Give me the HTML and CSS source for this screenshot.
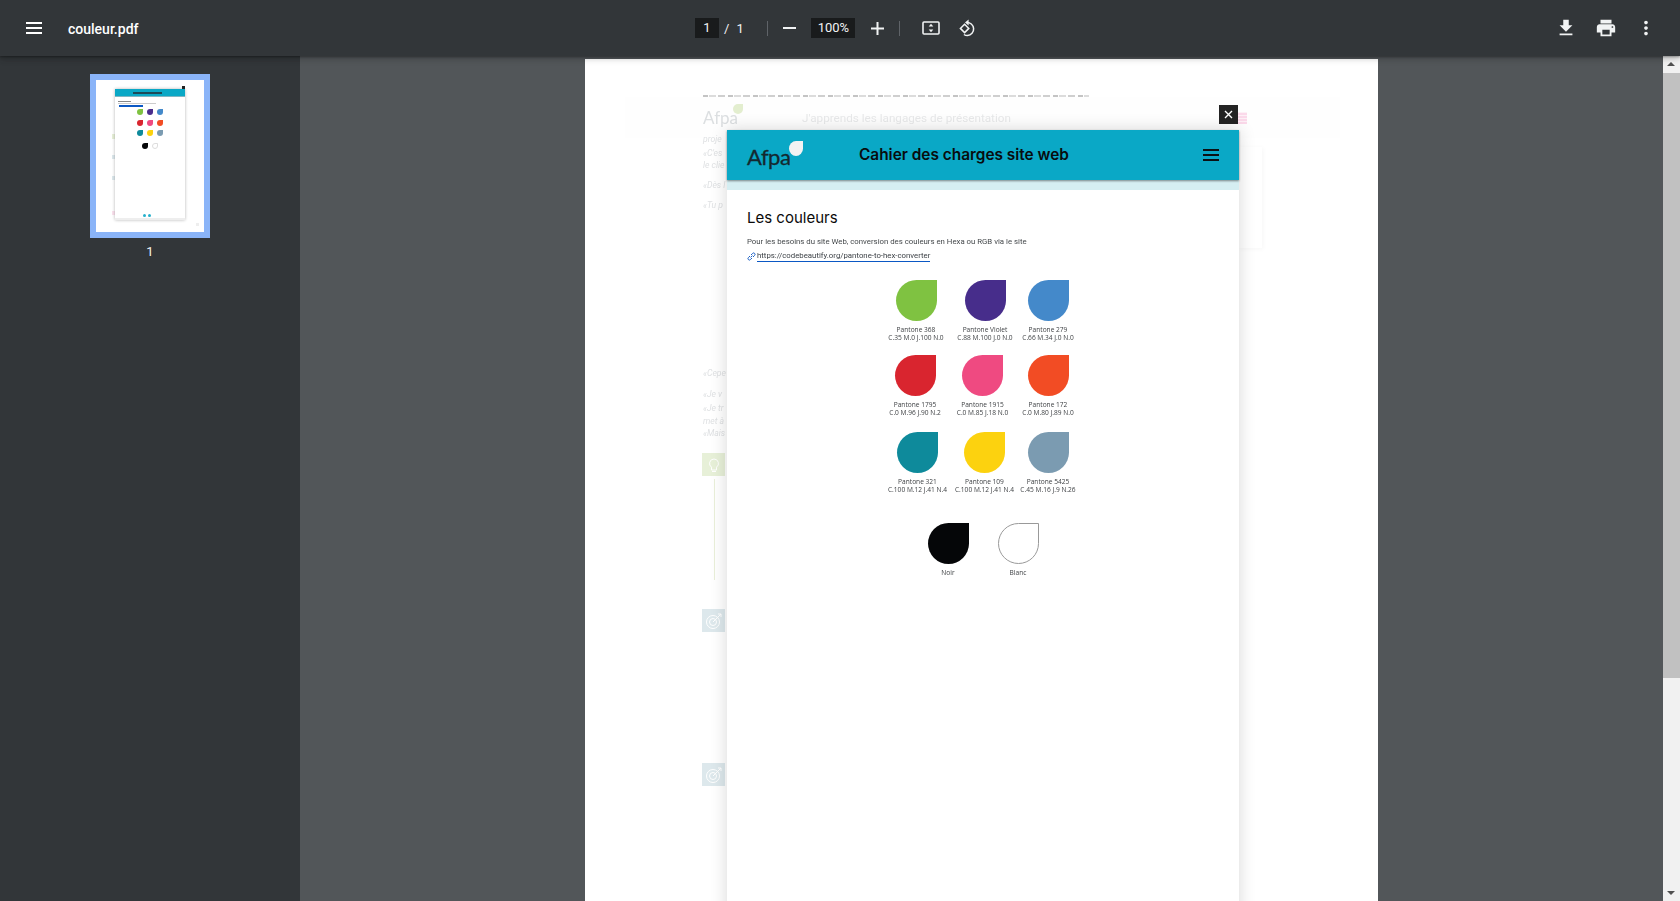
FILE: index.html
```html
<!DOCTYPE html>
<html>

<head>
    <title>couleur.pdf</title>
    <meta name='viewport' content='width=device-width'>
    <link rel="stylesheet" href="styles.css">
</head>

<body>
    <header class="toolbar">
        <div class="tb-left">
            <svg class="ico-menu" width="16" height="12" viewBox="0 0 16 12"><path d="M0 0h16v2H0zM0 5h16v2H0zM0 10h16v2H0z" fill="#fff"/></svg>
            <span class="doc-title">couleur.pdf</span>
        </div>
        <div class="tb-center">
            <span class="num-box page-box">1</span>
            <span class="page-sep">/</span>
            <span class="page-total">1</span>
            <span class="tb-divider first"></span>
            <svg class="ico-minus" width="13" height="2" viewBox="0 0 13 2"><path d="M0 0h13v2H0z" fill="#f1f3f4"/></svg>
            <span class="num-box zoom-box">100%</span>
            <svg class="ico-plus" width="13" height="13" viewBox="0 0 13 13"><path d="M5.5 0h2v5.5H13v2H7.5V13h-2V7.5H0v-2h5.5z" fill="#f1f3f4"/></svg>
            <span class="tb-divider second"></span>
            <svg class="ico-fit" width="18" height="14" viewBox="0 0 18 14"><rect x="1" y="1" width="16" height="12" rx="1" fill="none" stroke="#f1f3f4" stroke-width="1.6"/><path d="M9 2.8l2.3 2.8H6.700zM9 11.200L6.700 8.400h4.600z" fill="#f1f3f4"/></svg>
            <svg class="ico-rotate" width="18" height="18" viewBox="0 0 18 18"><path d="M5.600 5.200L1.400 9.400l4.200 4.200 4.200-4.200z" fill="none" stroke="#f1f3f4" stroke-width="1.5"/><path d="M7.500 3.400a6.600 6.600 0 1 1 1 13.200c-1.400 0-2.600-.4-3.600-1.100" fill="none" stroke="#f1f3f4" stroke-width="1.5"/><path d="M9.600 0.400L6 3.400l3.600 3z" fill="#f1f3f4"/></svg>
        </div>
        <div class="tb-right">
            <svg width="22" height="22" viewBox="0 0 24 24"><path d="M19 9h-4V3H9v6H5l7 7 7-7zM5 18v2h14v-2H5z" fill="#f1f3f4"/></svg>
            <svg width="22" height="22" viewBox="0 0 24 24"><path d="M19 8H5c-1.660 0-3 1.340-3 3v6h4v4h12v-4h4v-6c0-1.660-1.340-3-3-3zm-3 11H8v-5h8v5zm3-7c-.55 0-1-.45-1-1s.45-1 1-1 1 .45 1 1-.45 1-1 1zm-1-9H6v4h12V3z" fill="#f1f3f4"/></svg>
            <svg width="22" height="22" viewBox="0 0 24 24"><path d="M12 8c1.100 0 2-.9 2-2s-.9-2-2-2-2 .9-2 2 .9 2 2 2zm0 2c-1.100 0-2 .9-2 2s.9 2 2 2 2-.9 2-2-.9-2-2-2zm0 6c-1.100 0-2 .9-2 2s.9 2 2 2 2-.9 2-2-.9-2-2-2z" fill="#f1f3f4"/></svg>
        </div>
    </header>

    <div class="content">
        <aside class="sidebar">
            <div class="thumb">
                <div class="thumb-page">
                    <div class="mini-bit b-green"></div>
                    <div class="mini-bit b-blue1"></div>
                    <div class="mini-bit b-blue2"></div>
                    <div class="mini-bit b-pink"></div>
                    <div class="mini-bit b-dot"></div>
                    <div class="mini-close"></div>
                    <div class="mini-modal">
                        <div class="mini-head"><span class="mini-title"></span></div>
                        <div class="mini-line"></div>
                        <div class="mini-line short"></div>
                        <div class="mini-link"></div>
                        <div class="mini-row">
                            <i class="m-green"></i><i class="m-violet"></i><i class="m-blue"></i>
                        </div>
                        <div class="mini-row">
                            <i class="m-red"></i><i class="m-pink"></i><i class="m-orange"></i>
                        </div>
                        <div class="mini-row">
                            <i class="m-teal"></i><i class="m-yellow"></i><i class="m-grey"></i>
                        </div>
                        <div class="mini-row two">
                            <i class="m-black"></i><i class="m-white"></i>
                        </div>
                        <div class="mini-dots"><b></b><b></b></div>
                        <div class="mini-foot"></div>
                    </div>
                </div>
            </div>
            <div class="thumb-num">1</div>
        </aside>

        <main class="viewer">
            <div class="page">
                <!-- document behind the popup, washed out -->
                <div class="ghost-cut"></div>
                <div class="ghost-band"></div>
                <div class="ghost ghost-logo">Afpa<i></i></div>
                <div class="ghost ghost-h1">J'apprends les langages de présentation</div>
                <div class="ghost ghost-pink"></div>
                <div class="ghost ghost-card"></div>
                <div class="ghost ghost-text t1">proje</div>
                <div class="ghost ghost-text t2">«C'es</div>
                <div class="ghost ghost-text t3">le clie</div>
                <div class="ghost ghost-text t4">«Dès l</div>
                <div class="ghost ghost-text t5">«Tu p</div>
                <div class="ghost ghost-text t6">«Cepe</div>
                <div class="ghost ghost-text t7">«Je v</div>
                <div class="ghost ghost-text t8">«Je tr</div>
                <div class="ghost ghost-text t9">met à</div>
                <div class="ghost ghost-text t10">«Mais</div>
                <div class="ghost ghost-box bulb">
                    <svg width="16" height="18" viewBox="0 0 16 18"><path d="M8 3a4.500 4.500 0 0 0-2.500 8.200V14h5v-2.800A4.500 4.500 0 0 0 8 3zM6 15.500h4" fill="none" stroke="#fff" stroke-width="1"/></svg>
                </div>
                <div class="ghost ghost-rule"></div>
                <div class="ghost ghost-box target t-a">
                    <svg width="18" height="18" viewBox="0 0 18 18"><circle cx="8" cy="10" r="6.500" fill="none" stroke="#fff"/><circle cx="8" cy="10" r="3.500" fill="none" stroke="#fff"/><path d="M8 10l8-8M13 2h3v3" fill="none" stroke="#fff"/></svg>
                </div>
                <div class="ghost ghost-box target t-b">
                    <svg width="18" height="18" viewBox="0 0 18 18"><circle cx="8" cy="10" r="6.500" fill="none" stroke="#fff"/><circle cx="8" cy="10" r="3.500" fill="none" stroke="#fff"/><path d="M8 10l8-8M13 2h3v3" fill="none" stroke="#fff"/></svg>
                </div>

                <div class="close-btn">
                    <svg width="9" height="9" viewBox="0 0 9 9"><path d="M1 1l7 7M8 1L1 8" stroke="#fff" stroke-width="1.400"/></svg>
                </div>

                <section class="modal">
                    <div class="modal-head">
                        <div class="logo">Afpa<span class="logo-drop"></span></div>
                        <div class="modal-title">Cahier des charges site web</div>
                        <svg class="modal-burger" width="16" height="12" viewBox="0 0 16 12"><path d="M0 0h16v2H0zM0 5h16v2H0zM0 10h16v2H0z" fill="#0b1114"/></svg>
                    </div>
                    <div class="modal-band"></div>
                    <div class="modal-body">
                        <h2>Les couleurs</h2>
                        <p class="intro">Pour les besoins du site Web, conversion des couleurs en Hexa ou RGB via le site</p>
                        <p class="link-line">
                            <svg width="9" height="9" viewBox="0 0 9 9"><path d="M3.600 5.400l1.800-1.800M3 4L1.400 5.600a1.400 1.400 0 0 0 2 2L5 6M4 3l1.600-1.600a1.400 1.400 0 0 1 2 2L6 5" fill="none" stroke="#1a5fc4" stroke-width="1"/></svg>
                            <a href="#">https://codebeautify.org/pantone-to-hex-converter</a>
                        </p>

                        <div class="swatches row-1">
                            <div class="swatch"><div class="drop green"></div><span>Pantone 368</span><span>C.35 M.0 J.100 N.0</span></div>
                            <div class="swatch"><div class="drop violet"></div><span>Pantone Violet</span><span>C.88 M.100 J.0 N.0</span></div>
                            <div class="swatch"><div class="drop blue"></div><span>Pantone 279</span><span>C.66 M.34 J.0 N.0</span></div>
                        </div>
                        <div class="swatches row-2">
                            <div class="swatch"><div class="drop red"></div><span>Pantone 1795</span><span>C.0 M.96 J.90 N.2</span></div>
                            <div class="swatch"><div class="drop pink"></div><span>Pantone 1915</span><span>C.0 M.85 J.18 N.0</span></div>
                            <div class="swatch"><div class="drop orange"></div><span>Pantone 172</span><span>C.0 M.80 J.89 N.0</span></div>
                        </div>
                        <div class="swatches row-3">
                            <div class="swatch"><div class="drop teal"></div><span>Pantone 321</span><span>C.100 M.12 J.41 N.4</span></div>
                            <div class="swatch"><div class="drop yellow"></div><span>Pantone 109</span><span>C.100 M.12 J.41 N.4</span></div>
                            <div class="swatch"><div class="drop slate"></div><span>Pantone 5425</span><span>C.45 M.16 J.9 N.26</span></div>
                        </div>
                        <div class="swatches row-4">
                            <div class="swatch"><div class="drop black"></div><span>Noir</span></div>
                            <div class="swatch"><div class="drop white"></div><span>Blanc</span></div>
                        </div>
                    </div>
                </section>
            </div>
        </main>

        <div class="scrollbar">
            <div class="sb-arrow up"></div>
            <div class="sb-thumb"></div>
            <div class="sb-arrow down"></div>
        </div>
    </div>
</body>

</html>
```

FILE: styles.css
```css
* {
    box-sizing: border-box;
}

html, body {
    height: 100%;
}

body {
    margin: 0;
    overflow: hidden;
    font-family: Roboto, "Liberation Sans", sans-serif;
    background: #525659;
    display: flex;
    flex-direction: column;
}

/* toolbar */
.toolbar {
    height: 56px;
    flex: none;
    background: #323639;
    color: #f1f3f4;
    display: flex;
    align-items: center;
    position: relative;
    z-index: 3;
    box-shadow: 0 -1px 8px rgba(0, 0, 0, .09), 0 4px 8px rgba(0, 0, 0, .06), 0 1px 2px rgba(0, 0, 0, .3), 0 2px 6px rgba(0, 0, 0, .15);
}

.tb-left {
    width: 695px;
    flex: none;
    display: flex;
    align-items: center;
    padding-left: 26px;
}

.doc-title {
    margin-left: 26px;
    padding-top: 1px;
    font-size: 14px;
    font-weight: 500;
    color: #fff;
}

.tb-center {
    display: flex;
    align-items: center;
    flex: none;
}

.num-box {
    background: #191b1c;
    height: 20px;
    font-size: 13px;
    line-height: 20px;
    text-align: center;
    color: #f1f3f4;
}

.page-box {
    width: 24px;
}

.page-sep {
    margin-left: 5px;
    font-size: 13px;
}

.page-total {
    margin-left: 7px;
    font-size: 13px;
    width: 10px;
}

.tb-divider {
    width: 1px;
    height: 15px;
    background: #5f6368;
}

.tb-divider.first {
    margin-left: 21px;
}

.ico-minus {
    margin-left: 15px;
}

.zoom-box {
    width: 44px;
    margin-left: 15px;
}

.ico-plus {
    margin-left: 16px;
}

.tb-divider.second {
    margin-left: 15px;
}

.ico-fit {
    margin-left: 22px;
}

.ico-rotate {
    margin-left: 19px;
}

.tb-right {
    margin-left: auto;
    display: flex;
    gap: 18px;
    padding-right: 23px;
}

/* layout below toolbar */
.content {
    flex: 1;
    display: flex;
    min-height: 0;
}

.sidebar {
    width: 300px;
    flex: none;
    background: #323639;
    padding-top: 18px;
    display: flex;
    flex-direction: column;
    align-items: center;
}

.thumb {
    width: 120px;
    height: 164px;
    padding: 6px;
    background: #8ab4f8;
}

.thumb-page {
    height: 100%;
    background: #fff;
    position: relative;
    filter: blur(.4px);
}

.thumb-num {
    margin-top: 6px;
    font-size: 13px;
    color: #f1f3f4;
}

/* thumbnail contents */
.mini-bit {
    position: absolute;
    left: 16px;
    width: 3px;
    height: 4px;
}

.b-green { top: 54px; height: 5px; background: #e7f0d8; }
.b-blue1 { top: 75px; background: #dde8ec; }
.b-blue2 { top: 96px; background: #dde8ec; }
.b-pink { top: 131px; background: #fbe2ee; }
.b-dot { left: 100px; top: 143px; height: 3px; background: #eee; }

.mini-modal {
    position: absolute;
    left: 19px;
    top: 9px;
    width: 70px;
    height: 131px;
    background: #fff;
    box-shadow: 0 0 3px rgba(0, 0, 0, .3);
    display: flex;
    flex-direction: column;
}

.mini-close {
    position: absolute;
    left: 86px;
    top: 6px;
    width: 3px;
    height: 3px;
    background: #222;
    z-index: 1;
}

.mini-head {
    height: 8px;
    background: #0aa8c6;
    padding: 3px 0 0 18px;
    margin-bottom: 4px;
    border-bottom: 1px solid #7fb6c2;
}

.mini-title {
    display: block;
    width: 29px;
    height: 2px;
    background: #1d4a58;
}

.mini-line {
    height: 1px;
    width: 13px;
    margin: 0 0 1px 3px;
    background: #888;
}

.mini-line.short {
    width: 38px;
    background: #ccc;
}

.mini-link {
    width: 24px;
    height: 2px;
    margin: 0 0 0 4px;
    background: #0b58c4;
}

.mini-row {
    display: flex;
    gap: 4px;
    margin: 2px 0 2.500px 22px;
}

.mini-row i {
    width: 6px;
    height: 6px;
    border-radius: 50% 0 50% 50%;
    display: block;
}

.mini-row.two {
    margin: 4.500px 0 0 27px;
}

.m-green { background: #7fc241; }
.m-violet { background: #4a2d8c; }
.m-blue { background: #4389ca; }
.m-red { background: #d9252f; }
.m-pink { background: #ef4a81; }
.m-orange { background: #f24c24; }
.m-teal { background: #0e8a9b; }
.m-yellow { background: #fcd20f; }
.m-grey { background: #7b9bb1; }
.m-black { background: #050608; }
.m-white { background: #fff; border: 1px solid #ddd; }

.mini-dots {
    margin-top: auto;
    display: flex;
    justify-content: center;
    gap: 2px;
    padding-right: 6px;
    margin-bottom: 1px;
}

.mini-dots b {
    width: 3px;
    height: 3px;
    background: #25b0cc;
    border-radius: 50%;
}

.mini-foot {
    height: 2px;
    background: #eee;
}

/* main pdf view */
.viewer {
    flex: 1;
    min-width: 0;
    overflow: hidden;
    display: flex;
    justify-content: center;
    padding-top: 3px;
}

.page {
    width: 793px;
    height: 1122px;
    flex: none;
    background: #fff;
    position: relative;
    overflow: hidden;
}

.scrollbar {
    width: 17px;
    flex: none;
    background: #f1f1f1;
    display: flex;
    flex-direction: column;
}

.sb-arrow {
    height: 17px;
    flex: none;
    position: relative;
}

.sb-arrow::after {
    content: "";
    position: absolute;
    left: 4px;
    border-left: 4px solid transparent;
    border-right: 4px solid transparent;
}

.sb-arrow.up::after {
    top: 6px;
    border-bottom: 4px solid #505050;
}

.sb-arrow.down {
    margin-top: auto;
}

.sb-arrow.down::after {
    top: 7px;
    border-top: 4px solid #505050;
}

.sb-thumb {
    height: 605px;
    background: #c1c1c1;
}

/* washed out document under the popup */
.ghost {
    position: absolute;
    color: #e4e6e8;
    filter: blur(.5px);
}

.ghost-cut {
    position: absolute;
    left: 118px;
    top: 36px;
    width: 386px;
    height: 2px;
    background: repeating-linear-gradient(90deg, #c4c4c4 0 5px, #fff 5px 6px, #dcdcdc 6px 13px, #fff 13px 15px, #cfcfcf 15px 22px, #fff 22px 25px);
    filter: blur(.4px);
}

.ghost-band {
    position: absolute;
    left: 40px;
    top: 38px;
    width: 715px;
    height: 41px;
    background: #fefefe;
}

.ghost-logo {
    left: 118px;
    top: 48px;
    font-family: Lato, sans-serif;
    font-size: 17px;
    color: #dcdfe1;
}

.ghost-logo i {
    position: absolute;
    left: 30px;
    top: -3px;
    width: 10px;
    height: 10px;
    background: #e3eecf;
    border-radius: 50% 0 50% 50%;
}

.ghost-h1 {
    left: 217px;
    top: 52px;
    font-size: 11.700px;
    color: #e8e9ea;
}

.ghost-pink {
    left: 653px;
    top: 53px;
    width: 9px;
    height: 12px;
    background: repeating-linear-gradient(0deg, #fbd9ea 0 2px, #fdf0f6 2px 3px);
}

.ghost-card {
    left: 654px;
    top: 88px;
    width: 23px;
    height: 101px;
    background: #fff;
    box-shadow: 1px 1px 5px rgba(0, 0, 0, .04);
}

.ghost-text {
    left: 118px;
    font-size: 8.600px;
    font-style: italic;
    white-space: nowrap;
    color: #dfe1e3;
}

.t1 { top: 75px; }
.t2 { top: 89px; }
.t3 { top: 101px; }
.t4 { top: 121px; }
.t5 { top: 141px; }
.t6 { top: 309px; }
.t7 { top: 330px; }
.t8 { top: 344px; }
.t9 { top: 357px; }
.t10 { top: 369px; }

.ghost-box {
    left: 117px;
    width: 23px;
    height: 23px;
    display: flex;
    align-items: center;
    justify-content: center;
}

.bulb {
    top: 394px;
    background: #e7f0d8;
}

.ghost-rule {
    left: 129px;
    top: 420px;
    width: 1px;
    height: 101px;
    background: #e9efd9;
}

.target {
    background: #dde8ec;
}

.t-a { top: 550px; }
.t-b { top: 704px; }

.close-btn {
    position: absolute;
    left: 634px;
    top: 46px;
    width: 19px;
    height: 19px;
    background: #232323;
    display: flex;
    align-items: center;
    justify-content: center;
    z-index: 2;
}

/* popup */
.modal {
    position: absolute;
    left: 142px;
    top: 71px;
    width: 512px;
    height: 1040px;
    background: #fff;
    box-shadow: 0 0 16px rgba(0, 0, 0, .16);
    font-family: "Open Sans", sans-serif;
}

.modal-head {
    height: 50px;
    background: #0aa8c6;
    box-shadow: 0 1px 2px rgba(0, 0, 0, .45);
    display: flex;
    align-items: center;
    padding: 0 20px;
    position: relative;
}

.logo {
    width: 112px;
    font-family: Lato, "Liberation Sans", sans-serif;
    font-size: 22px;
    letter-spacing: -.5px;
    color: #14282f;
    -webkit-text-stroke: .3px #14282f;
    position: relative;
    padding-top: 3px;
}

.logo-drop {
    position: absolute;
    left: 42px;
    top: 1px;
    width: 14px;
    height: 15px;
    background: #f3f3f3;
    border-radius: 50% 0 50% 50%;
}

.modal-title {
    font-family: Inter, sans-serif;
    font-size: 15.400px;
    font-weight: 600;
    color: #080c0e;
    white-space: nowrap;
    padding-bottom: 2px;
}

.modal-burger {
    margin-left: auto;
}

.modal-band {
    height: 10px;
    background: #d5eef2;
}

.modal-body {
    padding: 16px 20px 0;
}

h2 {
    margin: 0;
    font-family: Inter, sans-serif;
    font-size: 15px;
    font-weight: 400;
    color: #0a0a0a;
    line-height: 24px;
}

.intro, .link-line {
    margin: 0;
    font-family: Roboto, sans-serif;
    font-size: 7.800px;
    color: #45494c;
    white-space: nowrap;
    filter: blur(.2px);
}

.intro {
    margin-top: 5px;
    line-height: 14px;
}

.link-line {
    line-height: 14px;
    display: flex;
    align-items: center;
    gap: 1px;
    height: 14px;
}

.link-line a {
    color: #3a3f44;
    text-decoration: none;
    border-bottom: 1px solid #0b58c4;
    line-height: 10px;
}

.swatches {
    display: grid;
    text-align: center;
}

/* the pdf was a picture: its rows don't line up exactly */
.row-1 {
    margin-top: 17px;
    padding-left: 131px;
    grid-template-columns: 76px 62px 64px;
}

.row-2 {
    margin-top: 13px;
    padding-left: 134px;
    grid-template-columns: 68px 67px 64px;
}

.row-3 {
    margin-top: 15px;
    padding-left: 135px;
    grid-template-columns: 71px 63px 64px;
}

.row-4 {
    margin-top: 29px;
    padding-left: 166px;
    grid-template-columns: 70px 70px;
}

.swatch {
    display: flex;
    flex-direction: column;
    align-items: center;
    font-family: "Open Sans", sans-serif;
    font-size: 6.600px;
    line-height: 8px;
    color: #3c3f42;
    white-space: nowrap;
    filter: blur(.3px);
}

.drop {
    width: 41px;
    height: 41px;
    border-radius: 50% 0 50% 50%;
    margin-bottom: 5px;
}

.green { background: #7fc241; }
.violet { background: #472d8b; }
.blue { background: #4489ca; }
.red { background: #d9252f; }
.pink { background: #ef4a81; }
.orange { background: #f24c24; }
.teal { background: #0e8a9b; }
.yellow { background: #fcd20f; }
.slate { background: #7b9bb1; }
.black { background: #050608; }
.white { background: #fff; border: 1px solid #999; }
```
